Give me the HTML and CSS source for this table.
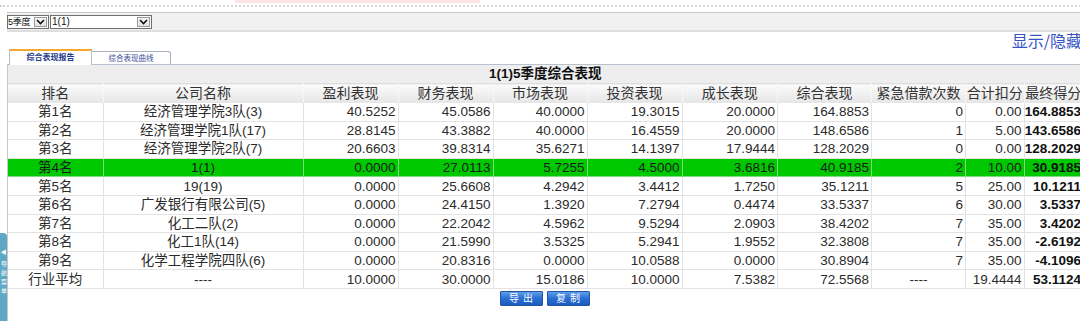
FILE: index.html
```html
<!DOCTYPE html>
<html lang="zh-CN">
<head>
<meta charset="utf-8">
<title>综合表现报告</title>
<link rel="stylesheet" href="styles.css">
</head>
<body>
<div class="page">
  <div class="topstrip"><div class="pink"></div></div>
  <div class="dotline"></div>
  <div class="selbar">
    <div class="sel sel-1"><span class="sel-text">5季度</span><span class="sel-arrow"><svg width="9" height="6" viewBox="0 0 9 6"><path d="M1 1 L4.5 4.5 L8 1" fill="none" stroke="#111" stroke-width="1.6"/></svg></span></div>
    <div class="sel sel-2"><span class="sel-text">1(1)</span><span class="sel-arrow"><svg width="9" height="6" viewBox="0 0 9 6"><path d="M1 1 L4.5 4.5 L8 1" fill="none" stroke="#111" stroke-width="1.6"/></svg></span></div>
  </div>
  <div class="toolrow"><a class="toggle">显示/隐藏</a></div>
  <div class="tabs">
    <div class="tab tab-active">综合表现报告</div>
    <div class="tab tab-idle">综合表现曲线</div>
  </div>
  <div class="panel">
    <table class="grid">
      <colgroup>
        <col class="c-rank"><col class="c-name"><col class="c-n"><col class="c-n"><col class="c-n94"><col class="c-n"><col class="c-n96"><col class="c-n94"><col class="c-n94"><col class="c-s"><col class="c-s">
      </colgroup>
      <thead>
        <tr class="title-row"><th colspan="11">1(1)5季度综合表现</th></tr>
        <tr class="head-row">
          <th>排名</th><th>公司名称</th><th>盈利表现</th><th>财务表现</th><th>市场表现</th><th>投资表现</th><th>成长表现</th><th>综合表现</th><th>紧急借款次数</th><th>合计扣分</th><th>最终得分</th>
        </tr>
      </thead>
      <tbody>
        <tr><td class="ctr">第1名</td><td class="ctr">经济管理学院3队(3)</td><td>40.5252</td><td>45.0586</td><td>40.0000</td><td>19.3015</td><td>20.0000</td><td>164.8853</td><td>0</td><td>0.00</td><td class="fin">164.8853</td></tr>
        <tr><td class="ctr">第2名</td><td class="ctr">经济管理学院1队(17)</td><td>28.8145</td><td>43.3882</td><td>40.0000</td><td>16.4559</td><td>20.0000</td><td>148.6586</td><td>1</td><td>5.00</td><td class="fin">143.6586</td></tr>
        <tr><td class="ctr">第3名</td><td class="ctr">经济管理学院2队(7)</td><td>20.6603</td><td>39.8314</td><td>35.6271</td><td>14.1397</td><td>17.9444</td><td>128.2029</td><td>0</td><td>0.00</td><td class="fin">128.2029</td></tr>
        <tr class="mine"><td class="ctr">第4名</td><td class="ctr">1(1)</td><td>0.0000</td><td>27.0113</td><td>5.7255</td><td>4.5000</td><td>3.6816</td><td>40.9185</td><td>2</td><td>10.00</td><td class="fin">30.9185</td></tr>
        <tr><td class="ctr">第5名</td><td class="ctr">19(19)</td><td>0.0000</td><td>25.6608</td><td>4.2942</td><td>3.4412</td><td>1.7250</td><td>35.1211</td><td>5</td><td>25.00</td><td class="fin">10.1211</td></tr>
        <tr><td class="ctr">第6名</td><td class="ctr">广发银行有限公司(5)</td><td>0.0000</td><td>24.4150</td><td>1.3920</td><td>7.2794</td><td>0.4474</td><td>33.5337</td><td>6</td><td>30.00</td><td class="fin">3.5337</td></tr>
        <tr><td class="ctr">第7名</td><td class="ctr">化工二队(2)</td><td>0.0000</td><td>22.2042</td><td>4.5962</td><td>9.5294</td><td>2.0903</td><td>38.4202</td><td>7</td><td>35.00</td><td class="fin">3.4202</td></tr>
        <tr><td class="ctr">第8名</td><td class="ctr">化工1队(14)</td><td>0.0000</td><td>21.5990</td><td>3.5325</td><td>5.2941</td><td>1.9552</td><td>32.3808</td><td>7</td><td>35.00</td><td class="fin">-2.6192</td></tr>
        <tr><td class="ctr">第9名</td><td class="ctr">化学工程学院四队(6)</td><td>0.0000</td><td>20.8316</td><td>0.0000</td><td>10.0588</td><td>0.0000</td><td>30.8904</td><td>7</td><td>35.00</td><td class="fin">-4.1096</td></tr>
        <tr><td class="ctr">行业平均</td><td class="ctr">----</td><td>10.0000</td><td>30.0000</td><td>15.0186</td><td>10.0000</td><td>7.5382</td><td>72.5568</td><td class="ctr">----</td><td>19.4444</td><td class="fin">53.1124</td></tr>
      </tbody>
    </table>
    <div class="actions">
      <button class="btn">导出</button>
      <button class="btn">复制</button>
    </div>
  </div>
</div>
<div class="navtab">
  <span class="nav-arrow">◀</span>
  <span class="nav-text">导航菜单</span>
</div>
</body>
</html>
```

FILE: styles.css
```css
* { box-sizing: border-box; }
html, body { margin: 0; padding: 0; }
body {
  width: 1080px;
  height: 321px;
  overflow: hidden;
  position: relative;
  background: #fff;
  font-family: "Liberation Sans", "Noto Sans CJK SC", Arial, sans-serif;
  color: #2b2b2b;
}
.page { width: 1084px; }

.topstrip { height: 5px; }
.pink { margin-left: 235px; width: 245px; height: 3px; background: #fde2e2; }
.dotline { border-top: 2px dotted #d6d6d6; }

.selbar {
  margin: 5px 0 0 7px;
  height: 20px;
  padding-top: 2px;
  border-top: 1px solid #c8c8c8;
  border-bottom: 2px solid #dedede;
  background: #f1f1f1;
  display: flex;
}
.sel {
  height: 14px;
  border: 1px solid #6e6e6e;
  background: #fff;
  display: flex;
  align-items: stretch;
  font-family: "Liberation Sans", "Noto Sans CJK SC", sans-serif;
  font-size: 10px;
  line-height: 12px;
  color: #111;
}
.sel-1 { width: 42px; }
.sel-2 { width: 102px; margin-left: 1px; }
.sel-text { flex: 1; padding-left: 1px; white-space: nowrap; }
.sel-1 .sel-text { font-size: 9px; padding-left: 0; letter-spacing: -0.2px; }
.sel-arrow {
  flex: none;
  width: 13px;
  margin: 1px 1px 1px 0;
  border: 1px solid #9a9a9a;
  background: linear-gradient(#f7f7f7, #e2e2e2);
  display: flex;
  align-items: center;
  justify-content: center;
}

.toolrow { height: 17px; text-align: right; padding-right: 2px; }
.toggle {
  font-family: "Noto Sans CJK SC", sans-serif;
  font-size: 16px;
  line-height: 17px;
  color: #3453c4;
}

.tabs {
  margin-left: 9px;
  height: 15px;
  display: flex;
  align-items: flex-end;
  position: relative;
  z-index: 1;
}
.tab {
  text-align: center;
  font-family: "Noto Sans CJK SC", sans-serif;
  white-space: nowrap;
}
.tab-active {
  width: 83px;
  height: 16px;
  margin-bottom: -1px;
  background: #fff;
  border-top: 2px solid #f2a92e;
  border-left: 1px solid #b7c0ca;
  border-right: 1px solid #b7c0ca;
  font-size: 8px;
  font-weight: bold;
  line-height: 11px;
  color: #1d3a8c;
}
.tab-idle {
  width: 79px;
  height: 13px;
  background: #fff;
  border: 1px solid #a7b2bd;
  border-bottom: none;
  border-left: none;
  border-radius: 0 3px 0 0;
  font-size: 7.5px;
  line-height: 12px;
  color: #3a4b9c;
}

.panel {
  margin-left: 7px;
  height: 260px;
  border-left: 1px solid #c8c8c8;
  border-top: 1px solid #b8c2cc;
}

.grid {
  width: 1074px;
  border-collapse: collapse;
  table-layout: fixed;
}
.c-rank { width: 95px; }
.c-name { width: 200px; }
.c-n { width: 95px; }
.c-n94 { width: 94px; }
.c-n96 { width: 95.5px; }
.c-s { width: 58.5px; }

.title-row th {
  height: 18px;
  padding: 0;
  background: #eeeeee;
  font-size: 13.5px;
  font-weight: bold;
  line-height: 18px;
  color: #111;
}
.head-row th {
  height: 19px;
  padding: 0;
  background: linear-gradient(#fbfbfb, #e5e5e5);
  border-top: 1px solid #dedede;
  border-right: 1px solid #f7f7f7;
  font-size: 14px;
  font-weight: normal;
  line-height: 17px;
  color: #333;
  white-space: nowrap;
  overflow: hidden;
}
.grid td {
  height: 18.6px;
  padding: 0 2px 0 0;
  border: 1px solid #e2e2e2;
  border-top: none;
  font-size: 13.5px;
  line-height: 17px;
  text-align: right;
  white-space: nowrap;
  overflow: hidden;
  color: #2b2b2b;
}
.grid td:first-child { border-left: none; }
.grid td.ctr { text-align: center; padding: 0; }
.grid td.fin { font-weight: bold; color: #111; padding-right: 1px; }
.mine td { background: #00c800; color: #1a1a1a; border-color: #7fd97f; }

.actions {
  display: flex;
  justify-content: center;
  gap: 4px;
  padding-top: 2px;
  width: 1074px;
}
.btn {
  width: 43px;
  height: 15px;
  padding: 0 0 0 3px;
  border: 1px solid #2456a6;
  border-radius: 1px;
  background: linear-gradient(#5f9ee8, #2a6fd2 50%, #1c5cc0);
  color: #fff;
  font-family: "Noto Sans CJK SC", sans-serif;
  font-size: 10px;
  line-height: 12px;
  letter-spacing: 4px;
}

.navtab {
  position: absolute;
  left: 0;
  top: 233px;
  width: 7px;
  height: 88px;
  background: #5ea8c5;
  border-radius: 0 4px 0 0;
  color: #fff;
  display: flex;
  flex-direction: column;
  align-items: center;
  padding-top: 16px;
  gap: 6px;
}
.nav-arrow {
  font-size: 6px;
  line-height: 6px;
}
.nav-text {
  writing-mode: vertical-rl;
  text-orientation: upright;
  font-family: "Noto Sans CJK SC", sans-serif;
  font-size: 6px;
  line-height: 6px;
  letter-spacing: 3px;
}
```
